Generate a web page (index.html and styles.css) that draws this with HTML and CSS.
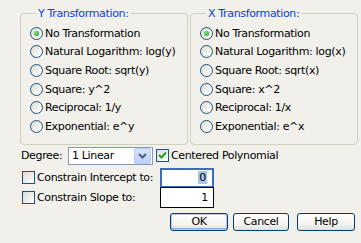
FILE: index.html
```html
<!DOCTYPE html>
<html>
<head>
<meta charset="utf-8">
<link rel="stylesheet" href="styles.css">
</head>
<body>
<div class="dialog">
  <div class="groups">
    <fieldset class="group">
      <legend>Y Transformation:</legend>
      <div class="options">
        <div class="opt"><span class="radio on"></span><span>No Transformation</span></div>
        <div class="opt"><span class="radio"></span><span>Natural Logarithm: log(y)</span></div>
        <div class="opt"><span class="radio"></span><span>Square Root: sqrt(y)</span></div>
        <div class="opt"><span class="radio"></span><span>Square: y^2</span></div>
        <div class="opt"><span class="radio"></span><span>Reciprocal: 1/y</span></div>
        <div class="opt"><span class="radio"></span><span>Exponential: e^y</span></div>
      </div>
    </fieldset>
    <fieldset class="group">
      <legend>X Transformation:</legend>
      <div class="options">
        <div class="opt"><span class="radio on"></span><span>No Transformation</span></div>
        <div class="opt"><span class="radio"></span><span>Natural Logarithm: log(x)</span></div>
        <div class="opt"><span class="radio"></span><span>Square Root: sqrt(x)</span></div>
        <div class="opt"><span class="radio"></span><span>Square: x^2</span></div>
        <div class="opt"><span class="radio"></span><span>Reciprocal: 1/x</span></div>
        <div class="opt"><span class="radio"></span><span>Exponential: e^x</span></div>
      </div>
    </fieldset>
  </div>

  <div class="degree-row">
    <span class="degree-label">Degree:</span>
    <div class="combo">
      <span class="combo-text">1 Linear</span>
      <span class="combo-btn">
        <svg width="9" height="6" viewBox="0 0 9 6"><path d="M1 1 L4.5 4.5 L8 1" fill="none" stroke="#4d6185" stroke-width="2"/></svg>
      </span>
    </div>
    <span class="check checked">
      <svg width="9" height="9" viewBox="0 0 9 9"><path d="M1 4 L3.5 6.5 L8 1.5" fill="none" stroke="#21a121" stroke-width="2"/></svg>
    </span>
    <span class="check-label">Centered Polynomial</span>
  </div>

  <div class="constrain">
    <div class="crow">
      <span class="check"></span>
      <span class="clabel">Constrain Intercept to:</span>
      <div class="tbox focus"><span class="sel">0</span></div>
    </div>
    <div class="crow">
      <span class="check"></span>
      <span class="clabel">Constrain Slope to:</span>
      <div class="tbox plain"><span>1</span></div>
    </div>
  </div>

  <div class="buttons">
    <div class="btn default">OK</div>
    <div class="btn cancel">Cancel</div>
    <div class="btn help">Help</div>
  </div>
</div>
</body>
</html>
```

FILE: styles.css
```css
html, body {
  margin: 0;
  padding: 0;
  background: #f1f0eb;
}
body {
  font-family: "DejaVu Sans", sans-serif;
  font-size: 11px;
  letter-spacing: -0.35px;
  color: #000;
}
.dialog {
  width: 361px;
  height: 243px;
  box-sizing: border-box;
  padding: 7px 0 0 20px;
}
.groups {
  display: flex;
  gap: 2px;
}
.group {
  box-sizing: border-box;
  width: 168px;
  margin: 0;
  padding: 0 0 8px 9px;
  border: 1px solid #d0d0bf;
  border-radius: 4px;
}
.group legend {
  margin-left: 6px;
  padding: 0 2px;
  color: #0046d5;
  line-height: 13px;
  font-size: 11px;
}
.options {
  padding-top: 4px;
}
.opt {
  display: flex;
  align-items: center;
  height: 18.6px;
  white-space: nowrap;
}
.radio {
  box-sizing: border-box;
  width: 13px;
  height: 13px;
  flex: none;
  margin-right: 2px;
  border: 1px solid #1c5180;
  border-radius: 50%;
  background: linear-gradient(135deg, #dcdcd4 0%, #f2f2ee 60%, #ffffff 100%);
  position: relative;
}
.radio.on::after {
  content: "";
  position: absolute;
  left: 3px;
  top: 3px;
  width: 5px;
  height: 5px;
  border-radius: 50%;
  background: radial-gradient(circle at 40% 40%, #8ee28e 0%, #3fbf3f 50%, #21a121 100%);
}
.degree-row {
  display: flex;
  align-items: center;
  height: 18px;
  margin-top: 2px;
}
.degree-label {
  width: 47px;
  padding-left: 1px;
}
.combo {
  box-sizing: border-box;
  width: 85px;
  height: 18px;
  border: 1px solid #7f9db9;
  background: #fff;
  display: flex;
  align-items: center;
  padding: 0 1px 0 3px;
}
.combo-text {
  flex: 1;
}
.combo-btn {
  width: 15px;
  height: 14px;
  border: 1px solid #b9cbf3;
  border-radius: 2px;
  background: linear-gradient(#d8e4fd, #bcd0fa);
  display: flex;
  align-items: center;
  justify-content: center;
}
.check {
  box-sizing: border-box;
  width: 13px;
  height: 13px;
  flex: none;
  border: 1px solid #1c5180;
  background: linear-gradient(135deg, #dcdcd7 0%, #f0f0ec 60%, #ffffff 100%);
  display: flex;
  align-items: center;
  justify-content: center;
}
.degree-row .check {
  margin-left: 3px;
  margin-right: 2px;
}
.constrain {
  margin-top: 3px;
}
.crow {
  display: flex;
  align-items: center;
  height: 20px;
}
.crow .check {
  margin-left: 2px;
  margin-right: 2px;
}
.clabel {
  width: 123px;
  white-space: nowrap;
}
.tbox {
  box-sizing: border-box;
  width: 54px;
  height: 20px;
  background: #fff;
  display: flex;
  align-items: center;
  justify-content: flex-end;
}
.tbox.focus {
  border: 2px solid #3a6cc6;
  padding-right: 5px;
}
.tbox.plain {
  border: 1px solid #000;
  padding-right: 5px;
  height: 21px;
}
.sel {
  background: #a8c4e8;
  padding: 0 1px;
}
.buttons {
  display: flex;
  justify-content: flex-end;
  padding-right: 6px;
  margin-top: 5px;
  gap: 5px;
}
.btn {
  box-sizing: border-box;
  width: 58px;
  height: 18px;
  border: 1px solid #003c74;
  border-radius: 3px;
  background: linear-gradient(#ffffff 0%, #f5f4f0 60%, #e3e1d8 100%);
  display: flex;
  align-items: center;
  justify-content: center;
}
.btn.default {
  box-shadow: inset 0 0 0 1px #b7cbee, inset 0 -1px 0 1px #8faae0;
}
.btn.cancel {
  width: 56px;
}
.btn.help {
  margin-left: 3px;
}
```
